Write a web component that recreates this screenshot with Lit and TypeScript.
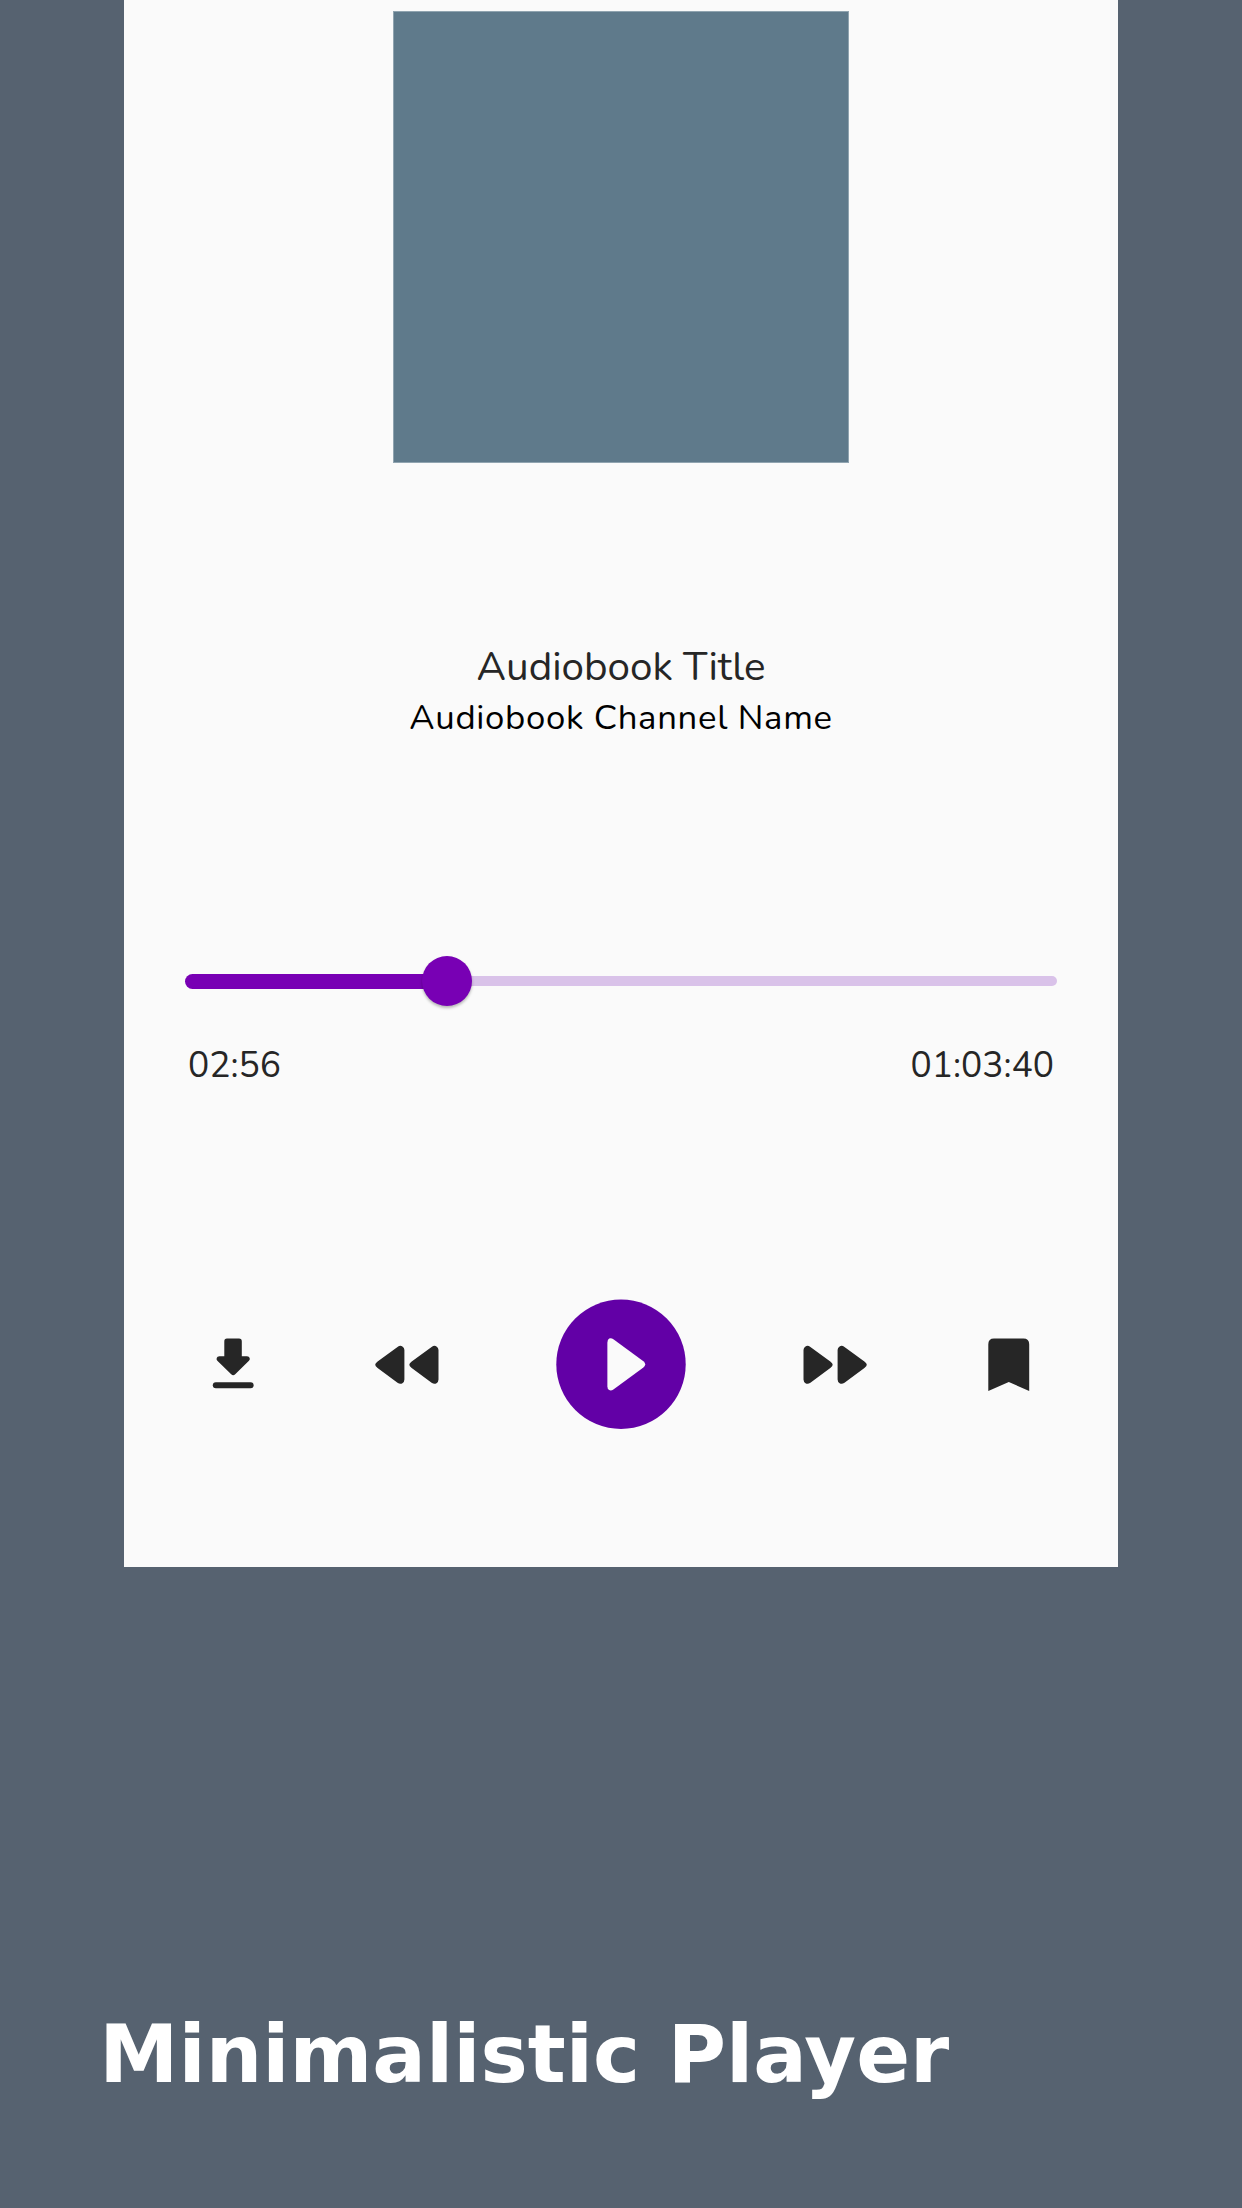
import { LitElement, html, css, svg } from "lit";
import { customElement, property } from "lit/decorators.js";

@customElement("seek-bar")
class SeekBar extends LitElement {
  @property({ type: Number }) value = 0;

  static styles = css`
    :host {
      display: block;
    }
    .bar {
      display: flex;
      align-items: center;
      height: 50px;
    }
    .played {
      box-sizing: border-box;
      display: flex;
      align-items: center;
      justify-content: flex-end;
      height: 15px;
      margin-right: -25px;
      border-radius: 8px 0 0 8px;
      background: #7800b4;
      z-index: 1;
    }
    .thumb {
      flex: none;
      width: 50px;
      height: 50px;
      margin-right: -25px;
      border-radius: 50%;
      background: #7800b4;
      box-shadow: 0 2px 3px rgba(0, 0, 0, 0.28);
    }
    .rest {
      flex: 1;
      height: 10px;
      border-radius: 0 5px 5px 0;
      background: #d9c2e9;
    }
  `;

  render() {
    return html`<div class="bar">
      <div class="played" style="width:${this.value}%"><div class="thumb"></div></div>
      <div class="rest"></div>
    </div>`;
  }
}

const leftTriangle = "M2.6 27.6 L22.5 12.9 Q25.2 11 27.4 12.4 Q29.4 13.6 29.4 16 V45.6 Q29.4 48 27.4 49.2 Q25.2 50.6 22.5 48.7 L2.6 34 Q0.2 32.2 0.2 30.8 Q0.2 29.4 2.6 27.6Z";

const icons = {
  download: svg`<svg width="49" height="60" viewBox="0 0 49 60">
    <path d="M18 4.6H30Q32.8 4.6 32.8 7.4V22.2H38Q40.2 22.2 40.7 23.9Q41.2 25.6 39.7 27L26.2 40.2Q24.2 42.2 22.2 40.2L8.6 27Q7.1 25.6 7.7 23.9Q8.2 22.2 10.4 22.2H15.3V7.4Q15.3 4.6 18 4.6Z"/>
    <rect x="3.8" y="48.2" width="40.8" height="6.1" rx="3"/>
  </svg>`,
  rewind: svg`<svg width="64" height="60" viewBox="0 0 64 60">
    <path d=${leftTriangle}/><path transform="translate(34.1 0)" d=${leftTriangle}/>
  </svg>`,
  forward: svg`<svg width="64" height="60" viewBox="0 0 64 60">
    <g transform="translate(64 0) scale(-1 1)"><path d=${leftTriangle}/><path transform="translate(34.1 0)" d=${leftTriangle}/></g>
  </svg>`,
  bookmark: svg`<svg width="49" height="60" viewBox="0 0 49 60">
    <path d="M10 4.5H39.4Q45.2 4.5 45.2 10.3V57L24.8 48L4.3 57V10.3Q4.3 4.5 10 4.5Z"/>
  </svg>`,
  play: svg`<svg width="130" height="130" viewBox="0 0 130 130">
    <circle cx="65" cy="65.2" r="64.7" fill="#6200a6"/>
    <path d="M51.4 43.4V87.4Q51.4 90.2 53.2 91.1Q55.2 92 57.4 90.4L87.4 68.4Q89.2 67 89.2 65.3Q89.2 63.6 87.4 62.2L57.4 40.2Q55.2 38.7 53.2 39.5Q51.4 40.6 51.4 43.4Z"/>
  </svg>`,
};

@customElement("app-root")
class AppRoot extends LitElement {
  static styles = css`
    :host {
      display: block;
    }
    .page {
      box-sizing: border-box;
      display: flex;
      flex-direction: column;
      align-items: center;
      height: 2208px;
      background: #566270;
    }
    .card {
      box-sizing: border-box;
      display: flex;
      flex-direction: column;
      align-items: center;
      width: 80%;
      height: 1567px;
      padding-top: 11px;
      background: #fafafa;
      color: #262626;
      font-family: Nunito, Lato, "Noto Sans", sans-serif;
    }
    .cover {
      box-sizing: border-box;
      width: 456px;
      height: 452px;
      border: 1px solid #90a4b0;
      background: #5f7a8b;
    }
    .title {
      margin-top: 178px;
      height: 52px;
      font-size: 40.4px;
      font-weight: 400;
      line-height: 52px;
      white-space: nowrap;
    }
    .channel {
      margin-top: 1px;
      height: 48px;
      color: #000;
      font-size: 34.7px;
      font-weight: 400;
      line-height: 48px;
      letter-spacing: 0.7px;
      white-space: nowrap;
    }
    .seek {
      width: 872px;
      margin-top: 214px;
    }
    .times {
      display: flex;
      justify-content: space-between;
      box-sizing: border-box;
      width: 872px;
      margin-top: 35px;
      padding: 0 3px;
      font-size: 35.4px;
      font-weight: 400;
      line-height: 48px;
    }
    .controls {
      box-sizing: border-box;
      display: flex;
      align-items: center;
      justify-content: space-between;
      width: 824px;
      height: 130px;
      margin-top: 210px;
      fill: #262626;
    }
    .controls svg {
      display: block;
    }
    .play {
      width: 130px;
      height: 130px;
      fill: #fafafa;
    }
    .caption {
      box-sizing: border-box;
      width: 100%;
      margin: 441px 0 0;
      padding-left: 8%;
      color: #fff;
      font: bold 79.488px/94px "DejaVu Sans", sans-serif;
      white-space: nowrap;
    }
  `;

  render() {
    return html`<div class="page">
      <div class="card">
        <div class="cover"></div>
        <div class="title">Audiobook Title</div>
        <div class="channel">Audiobook Channel Name</div>
        <seek-bar class="seek" .value=${30.05}></seek-bar>
        <div class="times"><span>02:56</span><span>01:03:40</span></div>
        <div class="controls">
          ${icons.download} ${icons.rewind}
          <div class="play">${icons.play}</div>
          ${icons.forward} ${icons.bookmark}
        </div>
      </div>
      <h1 class="caption">Minimalistic Player</h1>
    </div>`;
  }
}
